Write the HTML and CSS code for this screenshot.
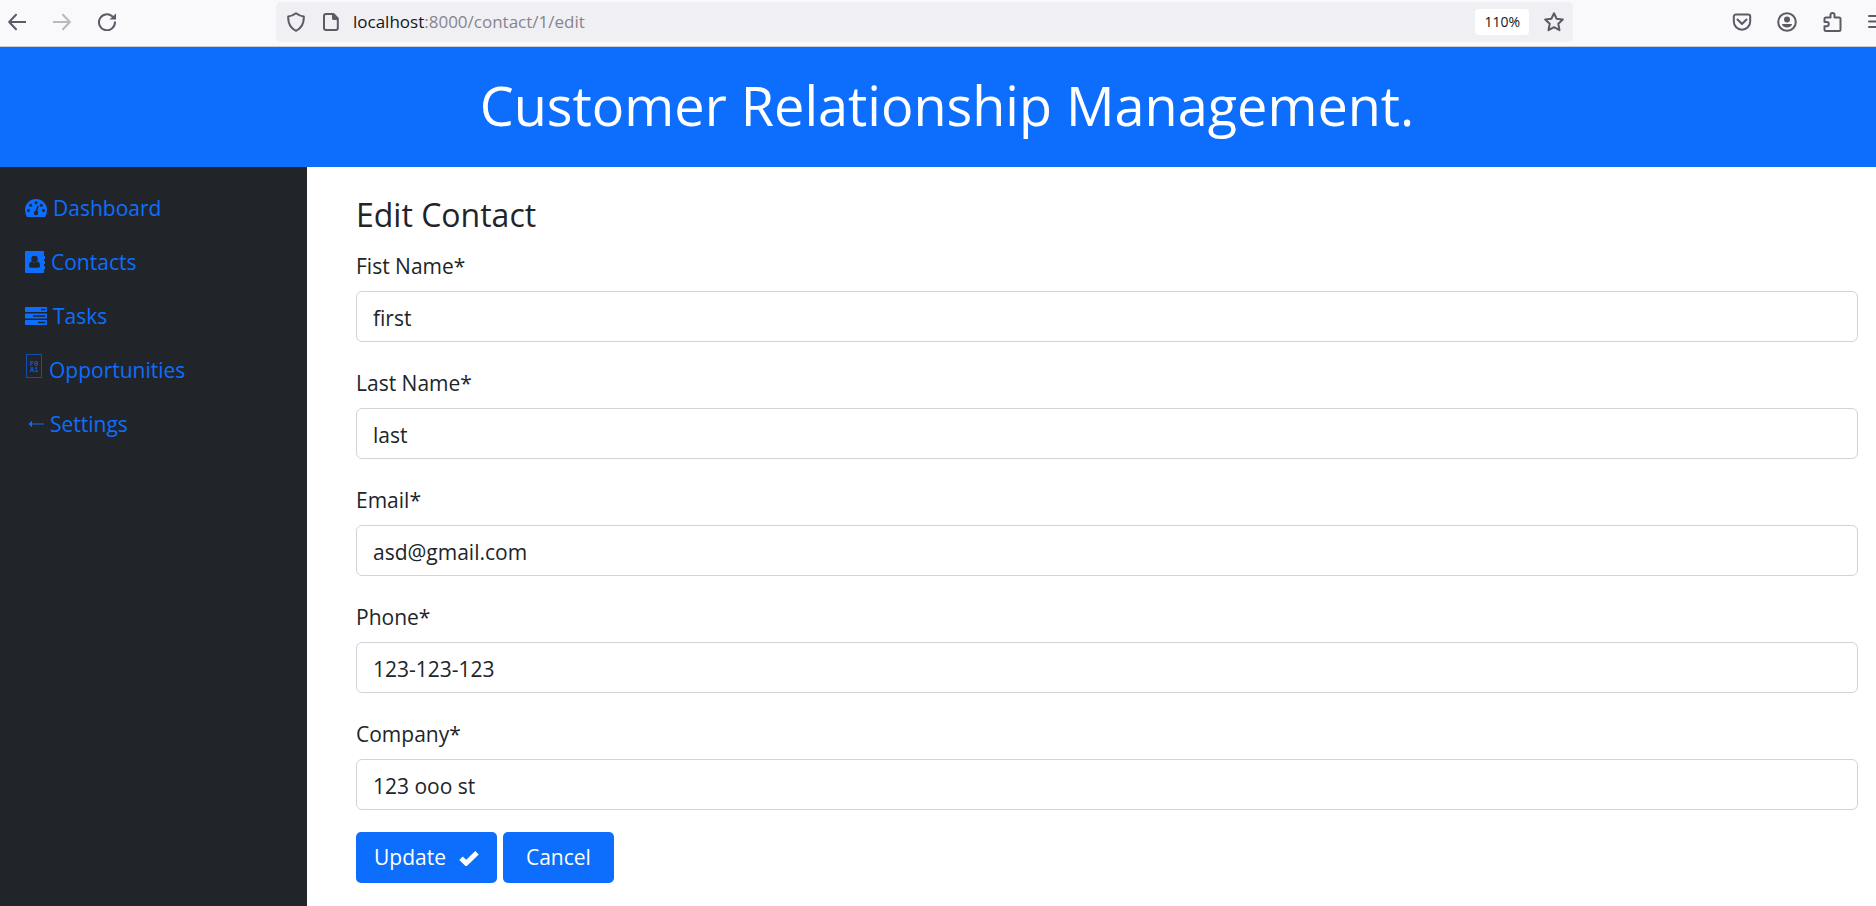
FILE: index.html
```html
<!DOCTYPE html>
<html lang="en">
<head>
<meta charset="utf-8">
<title>Edit Contact</title>
<link rel="stylesheet" href="styles.css">
</head>
<body>
<div class="toolbar">
  <div class="nav-buttons">
    <button class="tool" aria-label="Back"><svg width="18" height="18" viewBox="0 0 18 18"><path d="M17.500 9H1.500M8 1.800 1.200 9 8 16.200"/></svg></button>
    <button class="tool" aria-label="Forward" disabled><svg width="18" height="18" viewBox="0 0 18 18"><path d="M.5 9h16M10 1.800 16.800 9 10 16.200"/></svg></button>
    <button class="tool" aria-label="Reload"><svg width="18" height="18" viewBox="0 0 18 18"><path d="M14.200 3.200A8 8 0 1 0 17 9.300"/><path class="fill" d="M18 .5v6h-6.500z"/></svg></button>
  </div>
  <div class="address">
    <svg class="shield" width="18" height="20" viewBox="0 0 18 20"><path d="M9 1.200c2.500 1.900 5 2.900 7.800 3.300.3 6.500-2.300 11.700-7.800 14.300C3.500 16.200.9 11 1.200 4.500 4 4.100 6.500 3.100 9 1.200z"/></svg>
    <svg class="page" width="16" height="18" viewBox="0 0 16 18"><path d="M3 1h7.500L14.800 5.500V15a2 2 0 0 1-2 2H3a2 2 0 0 1-2-2V3a2 2 0 0 1 2-2z"/><path class="fill" d="M9 1h1.500l4.500 4.500V7h-4.500A1.500 1.500 0 0 1 9 5.500z"/></svg>
    <span class="url"><span class="host">localhost</span>:8000/contact/1/edit</span>
    <button class="zoom">110%</button>
    <button class="tool" aria-label="Bookmark"><svg width="20" height="20" viewBox="0 0 20 20"><path d="M10 1.200 12.600 6.700 18.800 7.500 14.300 11.800 15.500 18.200 10 15.200 4.500 18.200 5.700 11.800 1.200 7.500 7.400 6.700z"/></svg></button>
  </div>
  <div class="actions">
    <button class="tool" aria-label="Pocket"><svg width="20" height="20" viewBox="0 0 20 20"><path d="M3.800 2.500h12.400a2 2 0 0 1 2 2V9.500a8.200 8.200 0 0 1-16.400 0v-5a2 2 0 0 1 2-2zM5.500 7.500 10 12l4.500-4.500"/></svg></button>
    <button class="tool" aria-label="Account"><svg width="20" height="20" viewBox="0 0 20 20"><circle cx="10" cy="10" r="8.800"/><circle class="fill" cx="10" cy="7.500" r="3"/><path class="fill" d="M5 12h10c0 4.500-10 4.500-10 0z"/></svg></button>
    <button class="tool" aria-label="Extensions"><svg width="20" height="20" viewBox="0 0 20 20"><path d="M2.500 10V7a1.500 1.500 0 0 1 1.500-1.500h4.500V3a2 2 0 0 1 4 0v2.500H17A1.500 1.500 0 0 1 18.500 7v10.500A1.500 1.500 0 0 1 17 19H4a1.500 1.500 0 0 1-1.500-1.500V14.200h2.200a2.100 2.100 0 0 0 0-4.200z"/></svg></button>
    <button class="tool" aria-label="Menu"><svg width="20" height="20" viewBox="0 0 20 20"><path d="M2 4h16M2 9.500h16M2 15h16"/></svg></button>
  </div>
</div>
<header class="banner"><h1>Customer Relationship Management.</h1></header>
<div class="layout">
  <nav class="sidebar">
    <a href="#"><svg width="22" height="18" viewBox="0 0 22 18"><path d="M2 18Q0 15 0 11a11 11 0 0 1 22 0q0 4-2 7z"/><g class="cut"><circle cx="3.500" cy="11.500" r="1.500"/><circle cx="5.700" cy="6.200" r="1.500"/><circle cx="11" cy="3.700" r="1.500"/><circle cx="16.300" cy="6.200" r="1.500"/><circle cx="18.500" cy="11.500" r="1.500"/><circle cx="11" cy="14" r="2.200"/><path d="m12.300 6.500 1.300.4-1.600 7-1.800-.4z"/></g></svg>Dashboard</a>
    <a href="#"><svg width="20" height="22" viewBox="0 0 20 22"><path d="M1 0h17a1 1 0 0 1 1 1v4h1.500v3H19v2h1.500v3H19v2h1.500v3H19v3a1 1 0 0 1-1 1H1a1 1 0 0 1-1-1V1a1 1 0 0 1 1-1z"/><g class="cut"><circle cx="9.500" cy="8" r="3.200"/><path d="M6.500 10.500c2 1.300 4 1.300 6 0 1.800.3 2.500 2 2.500 4.300 0 1.200-.6 1.900-1.800 1.900H5.800C4.600 16.700 4 16 4 14.800c0-2.300.7-4 2.500-4.300z"/></g></svg>Contacts</a>
    <a href="#"><svg width="22" height="18" viewBox="0 0 22 18"><path d="M.5 0h21l.5.5v4l-.5.500H.5L0 4.500v-4zM.5 6.500h21l.5.500v4l-.5.500H.5L0 11V7zM.5 13h21l.5.500v4l-.5.500H.5L0 17.500v-4z"/><g class="cut"><path d="M16 1.800h4.500v1.500H16zM8 8.300h12.500v1.400H8zM13 14.800h7.500v1.400H13z"/></g></svg>Tasks</a>
    <a href="#"><svg class="raised" width="18" height="24" viewBox="0 0 18 24"><rect class="frame" x="1.500" y=".5" width="15" height="23"/><text x="5" y="12">F0</text><text x="5" y="18">A1</text></svg>Opportunities</a>
    <a href="#"><svg width="19" height="8" viewBox="0 0 19 8"><path d="M3.500 4 7 .8V3.500h12v1H7v2.700z"/></svg>Settings</a>
  </nav>
  <main class="content">
    <h2>Edit Contact</h2>
    <form>
      <div class="fields">
        <div class="field"><label for="first">Fist Name*</label><input id="first" type="text" value="first"></div>
        <div class="field"><label for="last">Last Name*</label><input id="last" type="text" value="last"></div>
        <div class="field"><label for="email">Email*</label><input id="email" type="email" value="asd@gmail.com"></div>
        <div class="field"><label for="phone">Phone*</label><input id="phone" type="text" value="123-123-123"></div>
        <div class="field"><label for="company">Company*</label><input id="company" type="text" value="123 ooo st"></div>
      </div>
      <div class="buttons">
        <button class="btn" type="button">Update<svg width="20" height="16" viewBox="0 0 20 16"><path d="m2 8.200 5.200 5L18 2.800"/></svg></button>
        <button class="btn btn-wide" type="button">Cancel</button>
      </div>
    </form>
  </main>
</div>
</body>
</html>
```
FILE: styles.css
```css
* { box-sizing: border-box; }

body {
  margin: 0;
  min-height: 100vh;
  display: flex;
  flex-direction: column;
  overflow-x: hidden;
  font: 21px/33px "Open Sans", "Noto Sans", sans-serif;
  color: #212529;
  background: #fff;
}

button, input { font: inherit; color: inherit; }
svg { display: block; flex: none; }

/* Browser toolbar */
.toolbar {
  display: flex;
  align-items: center;
  height: 47px;
  padding-bottom: 3px;
  overflow: hidden;
  background: #f9f9fb;
  border-bottom: 1px solid #cccccf;
}
.toolbar svg { fill: none; stroke: #5b5b66; stroke-width: 2; stroke-linecap: round; stroke-linejoin: round; }
.toolbar .fill { fill: #5b5b66; stroke: none; }
.tool { flex: none; padding: 0; border: 0; background: none; }
.tool:disabled { opacity: 0.4; }
.nav-buttons { flex: none; display: flex; gap: 27px; width: 276px; padding-left: 8px; }
.address {
  flex: 1;
  display: flex;
  align-items: center;
  height: 40px;
  padding: 0 9px 0 11px;
  border-radius: 5px;
  background: #f0f0f4;
}
.page { margin: 0 14px 0 18px; }
.url { flex: 1; font-size: 17px; line-height: 24px; color: #85858c; }
.host { color: #15141a; }
.zoom {
  margin-right: 15px;
  padding: 0 9px;
  border: 0;
  border-radius: 4px;
  background: #fff;
  color: #15141a;
  font-size: 14px;
  line-height: 26px;
}
.actions { flex: none; display: flex; gap: 25px; width: 303px; padding-left: 159px; }

/* Page header */
.banner { padding-left: 18px; background: #0d6efd; color: #fff; text-align: center; }
h1 { margin: 0; padding-bottom: 4px; font-size: 54px; line-height: 116px; font-weight: 400; }

/* Sidebar */
.layout { flex: 1; display: flex; }
.sidebar { flex: none; width: 307px; padding: 14px 25px; background: #212529; color: #0d6efd; }
.sidebar a {
  display: flex;
  align-items: center;
  gap: 6px;
  padding: 11px 0;
  line-height: 32px;
  color: inherit;
  text-decoration: none;
}
.sidebar svg { fill: #0d6efd; }
.sidebar .cut { fill: #212529; }
.sidebar .raised { margin-bottom: 8px; }
.sidebar .frame { fill: none; stroke: #0f4fae; }
.sidebar text { font: 7px "Liberation Mono", monospace; }

/* Form */
.content { flex: 1; padding: 28px 18px 23px 49px; }
h2 { margin: 0 0 15px; font-size: 32px; line-height: 40px; font-weight: 400; }
.fields { display: grid; gap: 25px; }
.field label { display: block; margin-bottom: 8px; }
.field input {
  display: block;
  width: 100%;
  height: 51px;
  padding: 2px 16px 0;
  border: 1px solid #ced4da;
  border-radius: 6px;
  background: #fff;
}
.buttons { display: flex; gap: 6px; margin-top: 22px; }
.btn {
  display: flex;
  align-items: center;
  gap: 13px;
  height: 51px;
  padding: 0 18px;
  border: 0;
  border-radius: 5px;
  background: #0d6efd;
  color: #fff;
}
.btn svg { fill: none; stroke: #fff; stroke-width: 5; }
.btn-wide { padding: 0 23px; }
```
